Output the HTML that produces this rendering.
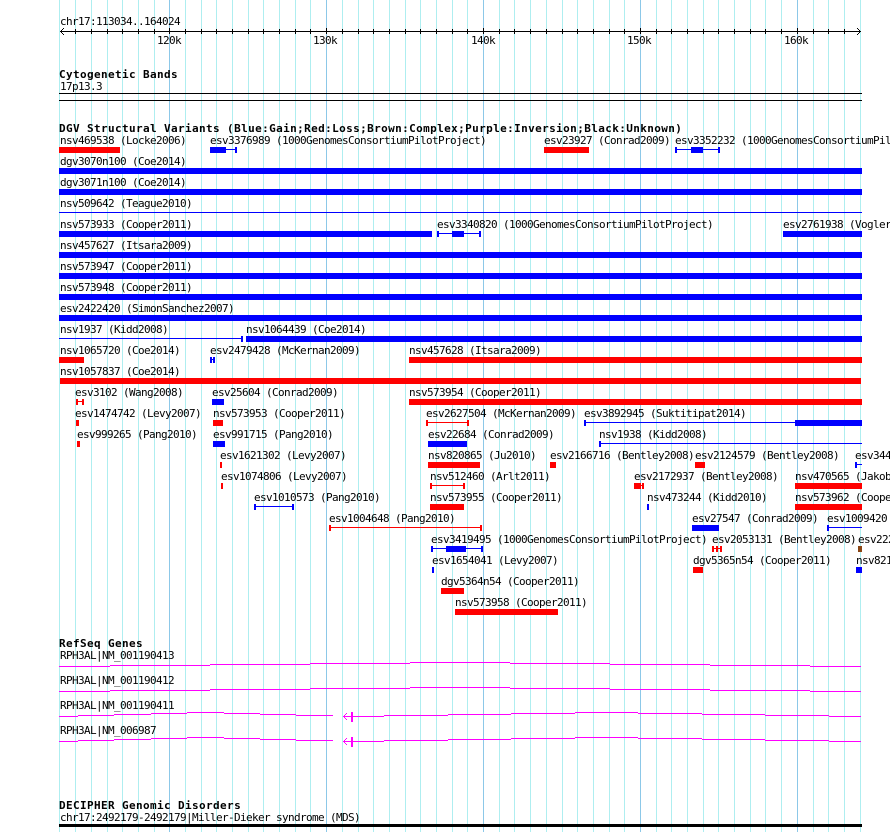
<!DOCTYPE html>
<html><head><meta charset="utf-8"><title>chr17:113034..164024</title>
<style>
html,body{margin:0;padding:0;background:#fff;width:890px;height:832px;overflow:hidden}
svg{display:block;position:absolute;left:0;top:0}
text{font-family:"DejaVu Sans Mono","Liberation Mono",monospace;font-size:11px;letter-spacing:-.622px;fill:#000;white-space:pre}
text.t{font-weight:bold;letter-spacing:.38px}
</style></head><body>
<svg width="890" height="832" viewBox="0 0 890 832" xmlns="http://www.w3.org/2000/svg" shape-rendering="crispEdges">
<path fill="#aeeef0" d="M59 0h1v832h-1zM75 0h1v832h-1zM91 0h1v832h-1zM107 0h1v832h-1zM122 0h1v832h-1zM138 0h1v832h-1zM154 0h1v832h-1zM185 0h1v832h-1zM201 0h1v832h-1zM216 0h1v832h-1zM232 0h1v832h-1zM248 0h1v832h-1zM263 0h1v832h-1zM279 0h1v832h-1zM295 0h1v832h-1zM310 0h1v832h-1zM342 0h1v832h-1zM358 0h1v832h-1zM373 0h1v832h-1zM389 0h1v832h-1zM405 0h1v832h-1zM420 0h1v832h-1zM436 0h1v832h-1zM452 0h1v832h-1zM467 0h1v832h-1zM499 0h1v832h-1zM514 0h1v832h-1zM530 0h1v832h-1zM546 0h1v832h-1zM562 0h1v832h-1zM577 0h1v832h-1zM593 0h1v832h-1zM609 0h1v832h-1zM624 0h1v832h-1zM656 0h1v832h-1zM671 0h1v832h-1zM687 0h1v832h-1zM703 0h1v832h-1zM718 0h1v832h-1zM734 0h1v832h-1zM750 0h1v832h-1zM765 0h1v832h-1zM781 0h1v832h-1zM813 0h1v832h-1zM828 0h1v832h-1zM844 0h1v832h-1zM860 0h1v832h-1z"/>
<path fill="#8cc8e8" d="M169 0h1v832h-1zM326 0h1v832h-1zM483 0h1v832h-1zM640 0h1v832h-1zM797 0h1v832h-1z"/>

<!-- ruler -->
<path fill="#000" d="M60 31h801v1h-801zM75 29h1v5h-1zM91 29h1v5h-1zM107 29h1v5h-1zM122 29h1v5h-1zM138 29h1v5h-1zM154 29h1v5h-1zM169 28h1v6h-1zM185 29h1v5h-1zM201 29h1v5h-1zM216 29h1v5h-1zM232 29h1v5h-1zM248 29h1v5h-1zM263 29h1v5h-1zM279 29h1v5h-1zM295 29h1v5h-1zM310 29h1v5h-1zM326 28h1v6h-1zM342 29h1v5h-1zM358 29h1v5h-1zM373 29h1v5h-1zM389 29h1v5h-1zM405 29h1v5h-1zM420 29h1v5h-1zM436 29h1v5h-1zM452 29h1v5h-1zM467 29h1v5h-1zM483 28h1v6h-1zM499 29h1v5h-1zM514 29h1v5h-1zM530 29h1v5h-1zM546 29h1v5h-1zM562 29h1v5h-1zM577 29h1v5h-1zM593 29h1v5h-1zM609 29h1v5h-1zM624 29h1v5h-1zM640 28h1v6h-1zM656 29h1v5h-1zM671 29h1v5h-1zM687 29h1v5h-1zM703 29h1v5h-1zM718 29h1v5h-1zM734 29h1v5h-1zM750 29h1v5h-1zM765 29h1v5h-1zM781 29h1v5h-1zM797 28h1v6h-1zM813 29h1v5h-1zM828 29h1v5h-1zM844 29h1v5h-1zM61 30h1v1h-1zM61 32h1v1h-1zM62 29h1v1h-1zM62 33h1v1h-1zM63 28h1v1h-1zM63 34h1v1h-1zM859 30h1v1h-1zM859 32h1v1h-1zM858 29h1v1h-1zM858 33h1v1h-1zM857 28h1v1h-1zM857 34h1v1h-1z"/>
<!-- separators -->
<path fill="#000" d="M59 93h803v1h-803zM59 100h803v1h-803zM59 824h803v3h-803z"/>

<!-- blue features -->
<path fill="#0000ff" d="M210 147h16v6h-16zM226 149h10v1h-10zM235 147h2v6h-2zM675 147h2v6h-2zM675 149h45v1h-45zM691 147h12v6h-12zM718 147h2v6h-2zM59 168h803v6h-803zM59 189h803v6h-803zM59 212h803v1h-803zM59 231h373v6h-373zM437 231h2v6h-2zM437 233h44v1h-44zM452 231h12v6h-12zM479 231h2v6h-2zM783 231h79v6h-79zM59 252h803v6h-803zM59 273h803v6h-803zM59 294h803v6h-803zM59 315h803v6h-803zM59 338h184v1h-184zM241 336h2v6h-2zM246 336h616v6h-616zM210 357h2v6h-2zM213 357h2v6h-2zM210 359h5v1h-5zM212 399h12v6h-12zM584 420h2v6h-2zM584 422h211v1h-211zM795 420h67v6h-67zM213 441h12v6h-12zM428 441h39v6h-39zM599 441h2v6h-2zM599 443h263v1h-263zM855 462h2v6h-2zM855 464h7v1h-7zM254 504h2v6h-2zM254 506h40v1h-40zM292 504h2v6h-2zM647 504h2v6h-2zM692 525h27v6h-27zM827 525h2v6h-2zM827 527h35v1h-35zM431 546h2v6h-2zM431 548h52v1h-52zM446 546h20v6h-20zM481 546h2v6h-2zM432 567h2v6h-2zM856 567h6v6h-6z"/>
<!-- red features -->
<path fill="#ff0000" d="M59 147h61v6h-61zM544 147h45v6h-45zM59 357h25v6h-25zM409 357h453v6h-453zM60 378h801v6h-801zM76 399h2v6h-2zM82 399h2v6h-2zM76 401h8v1h-8zM409 399h453v6h-453zM76 420h3v6h-3zM213 420h10v6h-10zM426 420h2v6h-2zM426 422h43v1h-43zM467 420h2v6h-2zM77 441h3v6h-3zM220 462h2v6h-2zM428 462h52v6h-52zM550 462h6v6h-6zM695 462h10v6h-10zM221 483h2v6h-2zM430 483h2v6h-2zM430 485h35v1h-35zM463 483h2v6h-2zM634 483h7v6h-7zM641 485h3v1h-3zM642 483h2v6h-2zM795 483h67v6h-67zM430 504h34v6h-34zM795 504h67v6h-67zM329 525h2v6h-2zM329 527h153v1h-153zM480 525h2v6h-2zM712 546h2v6h-2zM716 546h2v6h-2zM720 546h2v6h-2zM712 548h10v1h-10zM693 567h10v6h-10zM441 588h23v6h-23zM455 609h103v6h-103z"/>
<path fill="#8b4513" d="M858 546h4v6h-4z"/>

<!-- genes -->
<path fill="#ff00ff" d="M59 666h51v1h-51zM110 665h100v1h-100zM210 664h100v1h-100zM310 663h100v1h-100zM410 662h100v1h-100zM510 663h100v1h-100zM610 664h100v1h-100zM710 665h100v1h-100zM810 666h51v1h-51zM59 691h51v1h-51zM110 690h100v1h-100zM210 689h100v1h-100zM310 688h100v1h-100zM410 687h100v1h-100zM510 688h100v1h-100zM610 689h100v1h-100zM710 690h100v1h-100zM810 691h51v1h-51zM59 716h19v1h-19zM78 715h36v1h-36zM114 714h37v1h-37zM151 713h36v1h-36zM187 712h37v1h-37zM224 713h36v1h-36zM260 714h36v1h-36zM296 715h37v1h-37zM343 716h41v1h-41zM384 715h64v1h-64zM448 714h63v1h-63zM511 713h64v1h-64zM575 712h63v1h-63zM638 713h64v1h-64zM702 714h63v1h-63zM765 715h64v1h-64zM829 716h32v1h-32zM351 712h2v10h-2zM344 715h1v3h-1zM345 714h1v1h-1zM345 718h1v1h-1zM346 713h1v1h-1zM346 719h1v1h-1zM59 741h19v1h-19zM78 740h36v1h-36zM114 739h37v1h-37zM151 738h36v1h-36zM187 737h37v1h-37zM224 738h36v1h-36zM260 739h36v1h-36zM296 740h37v1h-37zM343 741h41v1h-41zM384 740h64v1h-64zM448 739h63v1h-63zM511 738h64v1h-64zM575 737h63v1h-63zM638 738h64v1h-64zM702 739h63v1h-63zM765 740h64v1h-64zM829 741h32v1h-32zM351 737h2v10h-2zM344 740h1v3h-1zM345 739h1v1h-1zM345 743h1v1h-1zM346 738h1v1h-1zM346 744h1v1h-1z"/>

<!-- text -->
<text x="60" y="25">chr17:113034..164024</text>
<text x="157" y="44">120k</text>
<text x="313" y="44">130k</text>
<text x="471" y="44">140k</text>
<text x="627" y="44">150k</text>
<text x="784" y="44">160k</text>

<text class="t" x="59" y="78">Cytogenetic Bands</text>
<text x="60" y="90">17p13.3</text>
<text class="t" x="59" y="132">DGV Structural Variants (Blue:Gain;Red:Loss;Brown:Complex;Purple:Inversion;Black:Unknown)</text>

<text x="60" y="144">nsv469538 (Locke2006)</text>
<text x="210" y="144">esv3376989 (1000GenomesConsortiumPilotProject)</text>
<text x="544" y="144">esv23927 (Conrad2009)</text>
<text x="675" y="144">esv3352232 (1000GenomesConsortiumPilotProject)</text>
<text x="60" y="165">dgv3070n100 (Coe2014)</text>
<text x="60" y="186">dgv3071n100 (Coe2014)</text>
<text x="60" y="207">nsv509642 (Teague2010)</text>
<text x="60" y="228">nsv573933 (Cooper2011)</text>
<text x="437" y="228">esv3340820 (1000GenomesConsortiumPilotProject)</text>
<text x="783" y="228">esv2761938 (Vogler2010)</text>
<text x="60" y="249">nsv457627 (Itsara2009)</text>
<text x="60" y="270">nsv573947 (Cooper2011)</text>
<text x="60" y="291">nsv573948 (Cooper2011)</text>
<text x="60" y="312">esv2422420 (SimonSanchez2007)</text>
<text x="60" y="333">nsv1937 (Kidd2008)</text>
<text x="246" y="333">nsv1064439 (Coe2014)</text>
<text x="60" y="354">nsv1065720 (Coe2014)</text>
<text x="210" y="354">esv2479428 (McKernan2009)</text>
<text x="409" y="354">nsv457628 (Itsara2009)</text>
<text x="60" y="375">nsv1057837 (Coe2014)</text>
<text x="75" y="396">esv3102 (Wang2008)</text>
<text x="212" y="396">esv25604 (Conrad2009)</text>
<text x="409" y="396">nsv573954 (Cooper2011)</text>
<text x="75" y="417">esv1474742 (Levy2007)</text>
<text x="213" y="417">nsv573953 (Cooper2011)</text>
<text x="426" y="417">esv2627504 (McKernan2009)</text>
<text x="584" y="417">esv3892945 (Suktitipat2014)</text>
<text x="77" y="438">esv999265 (Pang2010)</text>
<text x="213" y="438">esv991715 (Pang2010)</text>
<text x="428" y="438">esv22684 (Conrad2009)</text>
<text x="599" y="438">nsv1938 (Kidd2008)</text>
<text x="220" y="459">esv1621302 (Levy2007)</text>
<text x="428" y="459">nsv820865 (Ju2010)</text>
<text x="550" y="459">esv2166716 (Bentley2008)</text>
<text x="695" y="459">esv2124579 (Bentley2008)</text>
<text x="855" y="459">esv344</text>
<text x="221" y="480">esv1074806 (Levy2007)</text>
<text x="430" y="480">nsv512460 (Arlt2011)</text>
<text x="634" y="480">esv2172937 (Bentley2008)</text>
<text x="795" y="480">nsv470565 (Jakobsson2008)</text>
<text x="254" y="501">esv1010573 (Pang2010)</text>
<text x="430" y="501">nsv573955 (Cooper2011)</text>
<text x="647" y="501">nsv473244 (Kidd2010)</text>
<text x="795" y="501">nsv573962 (Cooper2011)</text>
<text x="329" y="522">esv1004648 (Pang2010)</text>
<text x="692" y="522">esv27547 (Conrad2009)</text>
<text x="827" y="522">esv1009420 (Pang2010)</text>
<text x="431" y="543">esv3419495 (1000GenomesConsortiumPilotProject)</text>
<text x="712" y="543">esv2053131 (Bentley2008)</text>
<text x="858" y="543">esv222</text>
<text x="432" y="564">esv1654041 (Levy2007)</text>
<text x="693" y="564">dgv5365n54 (Cooper2011)</text>
<text x="856" y="564">nsv821</text>
<text x="441" y="585">dgv5364n54 (Cooper2011)</text>
<text x="455" y="606">nsv573958 (Cooper2011)</text>

<text class="t" x="59" y="647">RefSeq Genes</text>
<text x="60" y="659">RPH3AL|NM_001190413</text>
<text x="60" y="684">RPH3AL|NM_001190412</text>
<text x="60" y="709">RPH3AL|NM_001190411</text>
<text x="60" y="734">RPH3AL|NM_006987</text>

<text class="t" x="59" y="809">DECIPHER Genomic Disorders</text>
<text x="60" y="821">chr17:2492179-2492179|Miller-Dieker syndrome (MDS)</text>
</svg>
</body></html>
